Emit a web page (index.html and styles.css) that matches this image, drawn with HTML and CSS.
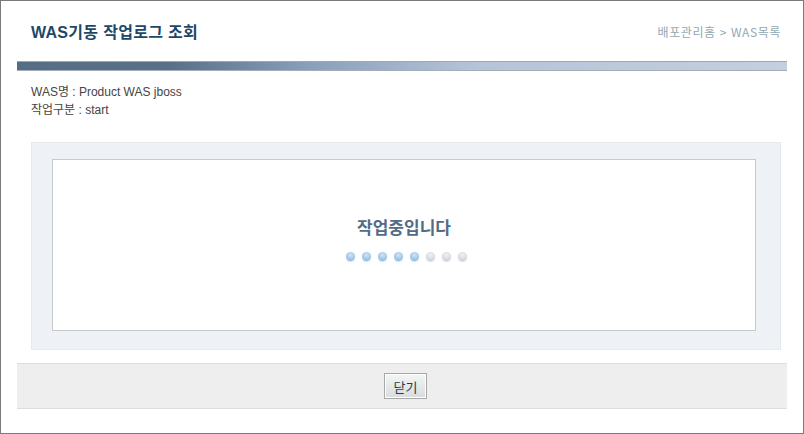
FILE: index.html
```html
<!DOCTYPE html>
<html lang="ko">
  <head>
    <meta charset="UTF-8" />
    <title>WAS기동 작업로그 조회</title>
    <link rel="stylesheet" href="styles.css">
  </head>
  <body>
    <div class="page">
      <div class="header">
        <h2 class="title">WAS기동 작업로그 조회</h2>
        <div class="location">배포관리홈 &gt; WAS목록</div>
      </div>
      <div class="title-bar"></div>

      <div class="info">
        <p>WAS명 : Product WAS jboss</p>
        <p>작업구분 : start</p>
      </div>

      <div class="log-wrap">
        <div class="log-box">
          <div class="loading-text">작업중입니다</div>
          <div class="dots">
            <span class="dot on"></span>
            <span class="dot on"></span>
            <span class="dot on"></span>
            <span class="dot on"></span>
            <span class="dot on"></span>
            <span class="dot"></span>
            <span class="dot"></span>
            <span class="dot"></span>
          </div>
        </div>
      </div>

      <div class="btn-area">
        <button type="button" class="btn">닫기</button>
      </div>
    </div>
  </body>
</html>
```

FILE: styles.css
```css
/* Styling */
* {
  box-sizing: border-box;
}
body {
  margin: 0;
  background-color: #fff;
  color: #444;
  font-family: "Liberation Sans", "Noto Sans CJK KR", sans-serif;
  font-size: 12px;
}
.page {
  width: 804px;
  height: 434px;
  border: 1px solid #7b7b7b;
  background-color: #fff;
}
.header {
  display: flex;
  justify-content: space-between;
  align-items: center;
  height: 60px;
  padding: 0 22px 0 30px;
}
.title {
  margin: 0;
  font-size: 16px;
  font-weight: bold;
  color: #1f4868;
  letter-spacing: 0.3px;
}
.location {
  font-size: 12px;
  color: #93a8b1;
  letter-spacing: 0.6px;
  font-family: "Noto Sans CJK KR", "Liberation Sans", sans-serif;
}
.title-bar {
  height: 10px;
  margin: 0 16px;
  border-top: 1px solid #9aa9b9;
  border-bottom: 1px solid #a3adb8;
  background: linear-gradient(to right, #566d86 0%, #5a7089 20%, #8a9fba 38%, #b6c4d8 60%, #c4cfdf 100%);
}
.info {
  padding: 12px 30px 0;
}
.info p {
  margin: 0;
  line-height: 18px;
  color: #444;
}
.log-wrap {
  margin: 23px 22px 0 30px;
  padding: 16px 24px 18px 20px;
  background-color: #eef1f5;
  border: 1px solid #e6eaef;
}
.log-box {
  height: 172px;
  border: 1px solid #c9c9c9;
  background-color: #fff;
  display: flex;
  flex-direction: column;
  align-items: center;
  gap: 15px;
  padding-top: 57px;
}
.loading-text {
  font-family: "Noto Sans CJK KR", sans-serif;
  font-size: 17px;
  font-weight: bold;
  color: #536c86;
  line-height: 20px;
}
.dots {
  display: flex;
  gap: 7px;
  margin-left: 4px;
}
.dot {
  width: 9px;
  height: 9px;
  border-radius: 50%;
  background: radial-gradient(circle at 50% 35%, #eef0f2 0%, #d9dde2 55%, #b9c0c8 100%);
  box-shadow: 0 1px 1px rgba(180, 190, 200, 0.5);
}
.dot.on {
  background: radial-gradient(circle at 50% 35%, #d3e6f6 0%, #a2c6e7 55%, #7fa8d6 100%);
  box-shadow: 0 1px 1px rgba(150, 185, 220, 0.5);
}
.btn-area {
  margin: 13px 16px 0;
  height: 46px;
  padding-left: 7px;
  background-color: #eee;
  border-top: 1px solid #ddd;
  border-bottom: 1px solid #ddd;
  display: flex;
  justify-content: center;
  align-items: center;
}
.btn {
  width: 43px;
  height: 26px;
  padding: 0;
  border: 1px solid #a7a7a7;
  box-shadow: inset 0 0 0 1px #fff;
  background: linear-gradient(to bottom, #f4f6f6, #d7dcdc);
  color: #2d3b44;
  font-family: "Noto Sans CJK KR", sans-serif;
  font-size: 13px;
  cursor: pointer;
}
```
